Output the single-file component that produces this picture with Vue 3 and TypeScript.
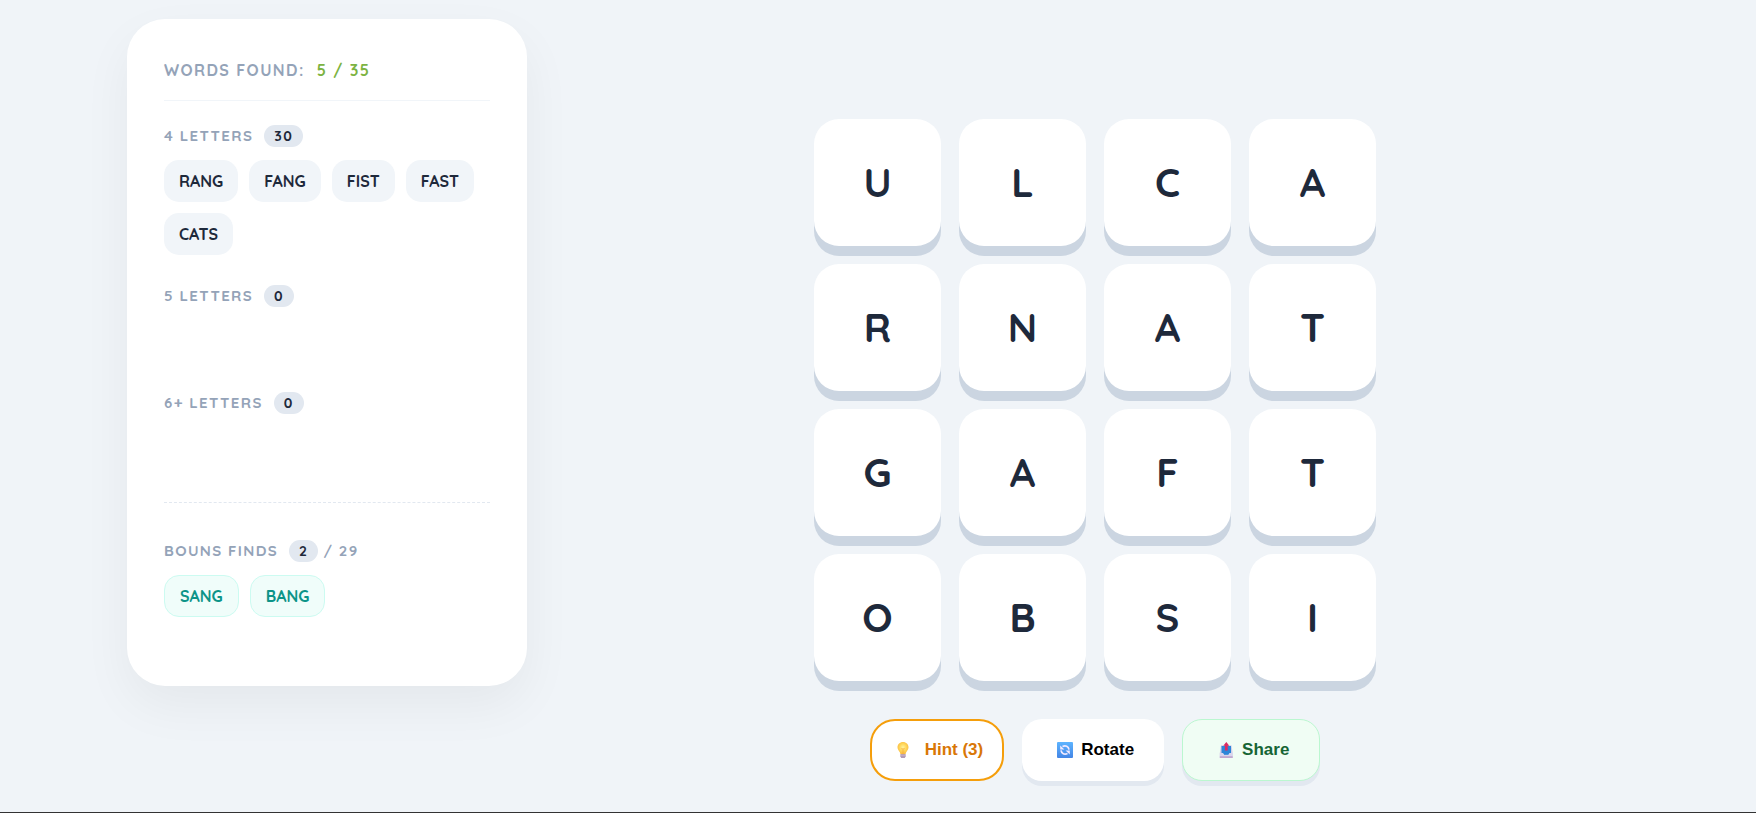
<script setup lang="ts">
import { reactive, ref } from 'vue'

interface WordGroup {
  title: string
  count: number
  words: string[]
}

const found = ref(5)
const total = ref(35)

const groups: WordGroup[] = [
  { title: '4 Letters', count: 30, words: ['RANG', 'FANG', 'FIST', 'FAST', 'CATS'] },
  { title: '5 Letters', count: 0, words: [] },
  { title: '6+ Letters', count: 0, words: [] },
]

const bonus = { title: 'Bouns Finds', count: 2, total: 29, words: ['SANG', 'BANG'] }

const board = reactive({ letters: 'ULCARNATGAFTOBSI'.split('') })
const hints = ref(3)

function rotate(): void {
  const source = board.letters.slice()
  board.letters = source.map((_, i) => {
    const row = Math.floor(i / 4)
    const col = i % 4
    return source[(3 - col) * 4 + row]
  })
}

function useHint(): void {
  if (hints.value > 0) hints.value -= 1
}
</script>

<template>
  <div class="page">
    <main class="game">
      <aside class="panel">
        <h1 class="panel-title">
          Words Found: <span class="score">{{ found }} / {{ total }}</span>
        </h1>

        <section v-for="group in groups" :key="group.title" class="group">
          <h2 class="group-title">
            {{ group.title }} <span class="badge">{{ group.count }}</span>
          </h2>
          <ul class="words">
            <li v-for="word in group.words" :key="word" class="word">{{ word }}</li>
          </ul>
        </section>

        <section class="group bonus">
          <h2 class="group-title">
            {{ bonus.title }} <span class="badge">{{ bonus.count }}</span>
            <span class="of">/ {{ bonus.total }}</span>
          </h2>
          <ul class="words">
            <li v-for="word in bonus.words" :key="word" class="word bonus-word">{{ word }}</li>
          </ul>
        </section>
      </aside>

      <section class="play">
        <div class="board">
          <button v-for="(letter, i) in board.letters" :key="i" type="button" class="tile">
            {{ letter }}
          </button>
        </div>

        <div class="actions">
          <button type="button" class="action hint" @click="useHint">
            <svg class="icon" viewBox="0 0 16 16" aria-hidden="true">
              <defs>
                <radialGradient id="glow" cx="0.5" cy="0.45" r="0.6">
                  <stop offset="0" stop-color="#fff3a0" />
                  <stop offset="0.5" stop-color="#ffd75a" />
                  <stop offset="1" stop-color="#f8b43c" />
                </radialGradient>
              </defs>
              <path d="M8 0C4.8 0 2.500 2.300 2.500 5.200c0 2.400 1.500 3.600 2.300 5 .4.8.5 1.400.6 2.100h5.200c.1-.7.2-1.300.6-2.100.8-1.400 2.300-2.600 2.300-5C13.500 2.300 11.200 0 8 0Z" fill="url(#glow)" />
              <path d="M6.300 6l1 1.200L8 6.300l.7.9 1-1.200M7.300 7.200v5M8.700 7.200v5" fill="none" stroke="#f3a93a" stroke-width=".6" />
              <path d="M5.400 12.200h5.200v2.300L9.800 16H6.200l-.8-1.500Z" fill="#a58bab" />
              <path d="M5.400 13.500h5.200M6 15h4" stroke="#d3c3d5" stroke-width=".6" />
            </svg>
            <span>Hint ({{ hints }})</span>
          </button>

          <button type="button" class="action" @click="rotate">
            <svg class="icon" viewBox="0 0 16 16" aria-hidden="true">
              <defs>
                <linearGradient id="square" x1="0" y1="0" x2="0" y2="1">
                  <stop offset="0" stop-color="#5db4ff" />
                  <stop offset="1" stop-color="#4485e5" />
                </linearGradient>
              </defs>
              <rect width="16" height="16" rx="1" fill="url(#square)" />
              <path d="M5.500 4.600c3-1.500 6-.2 6.500 3M10.500 11.400c-3 1.500-6 .2-6.500-3" fill="none" stroke="#f2eaff" stroke-width="1.700" />
              <path d="M3.200 3.400v4.200h4.200ZM12.800 12.600V8.400H8.600Z" fill="#f2eaff" />
            </svg>
            <span>Rotate</span>
          </button>

          <button type="button" class="action share">
            <svg class="icon" viewBox="0 0 16 16" aria-hidden="true">
              <path d="M3 3.200h10.500L14.700 11v5H1.800v-5Z" fill="#d5cfe8" />
              <path d="M3.500 4h9.500v8.500H3.500Z" fill="#2c86d8" />
              <path d="M1.800 11h3.200l1.200 1.700h4L11.500 11h3.200v3.300H1.800Z" fill="#d9d5ec" />
              <path d="M6 11h4.500v1.700H6Z" fill="#2c86d8" />
              <path d="M1.800 14.200h12.900V16H1.800Z" fill="#c0a8cf" />
              <path d="M8.300 0l3 3.800H9.700v4.600H6.900V3.800H5.300Z" fill="#dc2b61" />
            </svg>
            <span>Share</span>
          </button>
        </div>
      </section>
    </main>
    <footer class="foot"></footer>
  </div>
</template>

<style>
body {
  margin: 0;
  background: #f0f4f8;
}
</style>

<style scoped>
.page {
  box-sizing: border-box;
  min-height: 100vh;
  display: flex;
  flex-direction: column;
  padding-top: 19px;
  color: #1e293b;
  font-family: Quicksand, Lato, "Liberation Sans", sans-serif;
}

.game {
  box-sizing: border-box;
  width: 100%;
  max-width: 1502px;
  margin: 0 auto;
  display: flex;
  align-items: flex-start;
  gap: 34px;
}

.panel {
  box-sizing: border-box;
  flex: 0 0 400px;
  padding: 37px;
  border-radius: 38px;
  background: #fff;
  box-shadow: 0 20px 50px rgba(0, 0, 0, 0.05);
}

.panel-title {
  margin: 0 0 24px;
  padding-bottom: 16px;
  border-bottom: 1px solid #f1f5f9;
  color: #94a3b8;
  font-size: 16px;
  font-weight: 700;
  line-height: 28px;
  letter-spacing: 0.09em;
  text-transform: uppercase;
}

.score {
  margin-left: 6px;
  color: #7cb342;
}

.group {
  margin-bottom: 30px;
}

.group-title {
  display: flex;
  align-items: center;
  margin: 0 0 13px;
  color: #94a3b8;
  font-size: 15px;
  font-weight: 700;
  line-height: 22px;
  letter-spacing: 0.09em;
  text-transform: uppercase;
}

.badge {
  margin-left: 11px;
  padding: 0 10px;
  border-radius: 12px;
  background: #e2e8f0;
  color: #1e293b;
  font-size: 14px;
}

.of {
  margin-left: 5px;
}

.words {
  display: flex;
  flex-wrap: wrap;
  gap: 11px;
  min-height: 42px;
  margin: 0;
  padding: 0;
  list-style: none;
}

.word {
  padding: 10px 15px;
  border-radius: 15px;
  background: #f1f5f9;
  font-size: 16px;
  font-weight: 700;
  line-height: 22px;
}

.bonus {
  margin: 33px 0 32px;
  padding-top: 37px;
  border-top: 1px dashed #e2e8f0;
}

.bonus-word {
  padding: 9px 15px;
  border: 1px solid #ccfbf1;
  background: #f0fdfa;
  color: #0d9488;
}

.play {
  flex: 1;
  display: flex;
  flex-direction: column;
  align-items: center;
  gap: 38px;
  padding-top: 100px;
}

.board {
  width: 100%;
  max-width: 562px;
  display: grid;
  grid-template-columns: repeat(4, 1fr);
  gap: 18px;
}

.tile {
  aspect-ratio: 1;
  padding: 0 0 2px;
  border: 0;
  border-radius: 25px;
  background: #fff;
  box-shadow: 0 10px 0 #cbd5e1;
  color: #1e293b;
  font: inherit;
  font-size: 40px;
  font-weight: 700;
  cursor: pointer;
}

.actions {
  display: flex;
  gap: 18px;
}

.action {
  box-sizing: border-box;
  height: 62px;
  display: flex;
  align-items: center;
  gap: 8px;
  padding: 0 30px 0 35px;
  border: 0;
  border-radius: 20px;
  background: #fff;
  box-shadow: 0 5px 0 #e2e8f0;
  color: #000;
  font-family: Arial, "Liberation Sans", sans-serif;
  font-size: 17px;
  font-weight: 700;
  cursor: pointer;
}

.icon {
  width: 16px;
  height: 16px;
}

.hint {
  gap: 14px;
  padding: 0 19px 0 23px;
  border: 2px solid #f59e0b;
  border-radius: 25px;
  box-shadow: none;
  color: #d97706;
}

.share {
  padding: 0 30px 0 35px;
  border: 1px solid #bbf7d0;
  background: #f0fdf4;
  color: #166534;
}

.foot {
  margin-top: auto;
  border-top: 1px solid #333;
}
</style>
